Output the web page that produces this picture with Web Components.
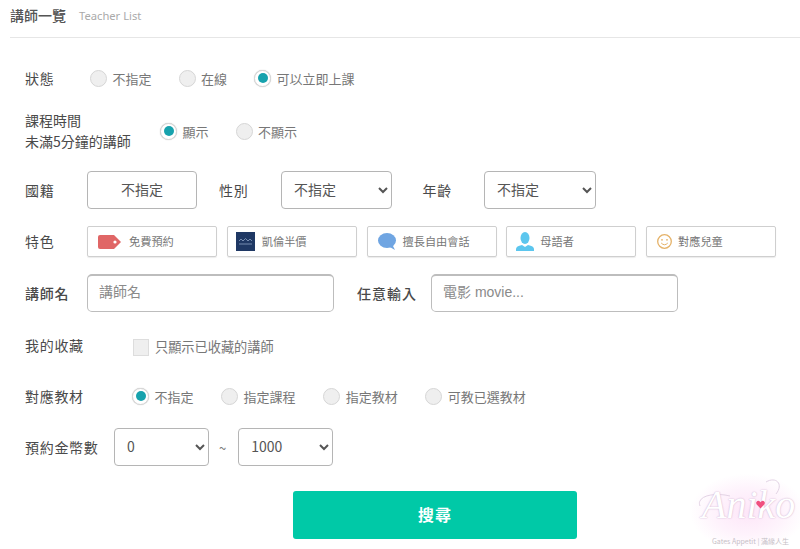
<!DOCTYPE html>
<html lang="zh-Hant">
<head>
<meta charset="utf-8">
<title>講師一覽</title>
<style>
html, body { margin: 0; padding: 0; background: #fff; }
body {
  width: 800px;
  height: 549px;
  overflow: hidden;
  font-family: "Noto Sans CJK TC", "Noto Sans", sans-serif;
}
</style>
</head>
<body>
<teacher-page>
  <page-title heading="講師一覽" sub="Teacher List"></page-title>

  <filter-row label="狀態" label-width="65" gap="27" style="--top:22px;--height:36px">
    <radio-option>不指定</radio-option>
    <radio-option>在線</radio-option>
    <radio-option checked>可以立即上課</radio-option>
  </filter-row>

  <filter-row label="課程時間&#10;未滿5分鐘的講師" label-width="135" gap="27" style="--top:14px;--height:42px;--label-spacing:0">
    <radio-option checked>顯示</radio-option>
    <radio-option>不顯示</radio-option>
  </filter-row>

  <filter-row label="國籍" label-width="62" style="--top:19px;--height:38px">
    <box-button>不指定</box-button>
    <filter-label style="margin:0 32.600px 0 22px">性別</filter-label>
    <select-box width="111">不指定</select-box>
    <filter-label style="margin:0 32px 0 30.500px">年齡</filter-label>
    <select-box width="112">不指定</select-box>
  </filter-row>

  <filter-row label="特色" label-width="62" gap="9.75" style="--top:17px;--height:31px">
    <feature-chip icon-left="10" icon-gap="8" text="免費預約">
      <svg width="23" height="14" viewBox="0 0 23 14"><path d="M2 0H16L23 7L16 14H2Q0 14 0 12V2Q0 0 2 0Z" fill="#e06666"/><circle cx="17" cy="7" r="1.6" fill="#fff"/></svg>
    </feature-chip>
    <feature-chip icon-left="8" icon-gap="7" text="凱倫半價">
      <svg width="19" height="19" viewBox="0 0 19 19"><rect width="19" height="19" fill="#1f3864"/><path d="M3 9L5 7L7 9L9.500 6.500L12 9L14 7L16 9M3 12H16" fill="none" stroke="#8ea3c4" stroke-width=".8"/></svg>
    </feature-chip>
    <feature-chip icon-left="10" icon-gap="7" text="擅長自由會話">
      <svg width="18" height="17" viewBox="0 0 18 17"><ellipse cx="9" cy="7.500" rx="9" ry="7.500" fill="#6fa5e2"/><path d="M10 13L17 17L14 11Z" fill="#6fa5e2"/></svg>
    </feature-chip>
    <feature-chip icon-left="9" icon-gap="6" text="母語者">
      <svg width="18" height="19" viewBox="0 0 18 19"><ellipse cx="9" cy="6" rx="4.500" ry="6" fill="#5cc6ee"/><path d="M0 19V17Q0 14 6 13L9 15L12 13Q18 14 18 17V19Z" fill="#5cc6ee"/></svg>
    </feature-chip>
    <feature-chip icon-left="10" icon-gap="6" text="對應兒童">
      <svg width="15" height="15" viewBox="0 0 15 15"><circle cx="7.500" cy="7.500" r="6.800" fill="none" stroke="#e5b268" stroke-width="1.300"/><circle cx="5" cy="5.800" r=".9" fill="#e5b268"/><circle cx="10" cy="5.800" r=".9" fill="#e5b268"/><path d="M4.200 9Q7.500 12.500 10.800 9" fill="none" stroke="#e5b268" stroke-width="1"/></svg>
    </feature-chip>
  </filter-row>

  <filter-row label="講師名" label-width="62" style="--top:17px;--height:38px;--label-weight:500">
    <text-field placeholder="講師名"></text-field>
    <filter-label style="margin:0 14px 0 23px;font-weight:500;letter-spacing:1px">任意輸入</filter-label>
    <text-field placeholder="電影 movie..."></text-field>
  </filter-row>

  <filter-row label="我的收藏" label-width="108" style="--top:18px;--height:30px">
    <check-option>只顯示已收藏的講師</check-option>
  </filter-row>

  <filter-row label="對應教材" label-width="107" gap="27.600" style="--top:21px;--height:30px">
    <radio-option checked>不指定</radio-option>
    <radio-option>指定課程</radio-option>
    <radio-option>指定教材</radio-option>
    <radio-option>可教已選教材</radio-option>
  </filter-row>

  <filter-row label="預約金幣數" label-width="89" style="--top:17px;--height:38px">
    <select-box width="95">0</select-box>
    <span style="margin:0 12px 0 10px;font-size:13px;color:#777">~</span>
    <select-box width="95">1000</select-box>
  </filter-row>

  <search-button>搜尋</search-button>
  <water-mark></water-mark>
</teacher-page>

<script>
class TeacherPage extends HTMLElement {
  constructor() {
    super();
    this.attachShadow({ mode: "open" }).innerHTML = `
<style>
:host { display: block; position: relative; width: 800px; height: 549px; overflow: hidden; }
</style>
<slot></slot>`;
  }
}

class PageTitle extends HTMLElement {
  connectedCallback() {
    this.attachShadow({ mode: "open" }).innerHTML = `
<style>
:host {
  display: flex;
  align-items: center;
  box-sizing: border-box;
  height: 38px;
  margin-left: 10px;
  padding-bottom: 8px;
  border-bottom: 1px solid #e6e6e6;
}
h1 { margin: 0; font-size: 14px; font-weight: 500; color: #555; line-height: 1; }
span { margin: 1px 0 0 13px; font-family: "Noto Sans", sans-serif; font-size: 11.2px; color: #aaa; }
</style>
<h1>${this.getAttribute("heading")}</h1>
<span>${this.getAttribute("sub")}</span>`;
  }
}

class FilterRow extends HTMLElement {
  connectedCallback() {
    const label = this.getAttribute("label").split("\n").join("<br>");
    this.attachShadow({ mode: "open" }).innerHTML = `
<style>
:host {
  display: flex;
  align-items: center;
  height: var(--height);
  margin-top: var(--top);
  padding-left: 25px;
}
.label {
  flex: none;
  width: ${this.getAttribute("label-width")}px;
  font-size: 14px;
  letter-spacing: var(--label-spacing, .7px);
  line-height: 21px;
  font-weight: var(--label-weight, 400);
  color: #4a4a4a;
}
.items { display: flex; align-items: center; gap: ${this.getAttribute("gap") || 0}px; }
</style>
<div class="label">${label}</div>
<div class="items"><slot></slot></div>`;
  }
}

class FilterLabel extends HTMLElement {
  constructor() {
    super();
    this.attachShadow({ mode: "open" }).innerHTML = `
<style>
:host { display: block; flex: none; font-size: 14px; letter-spacing: .7px; color: #4a4a4a; }
</style>
<slot></slot>`;
  }
}

class RadioOption extends HTMLElement {
  connectedCallback() {
    const on = this.hasAttribute("checked");
    this.attachShadow({ mode: "open" }).innerHTML = `
<style>
:host { display: flex; align-items: center; gap: 5.500px; font-size: 13px; color: #777; }
.dot {
  flex: none;
  box-sizing: border-box;
  width: 17px;
  height: 17px;
  border-radius: 50%;
  border: 1px solid #d6d6d6;
  background: #efefef;
  display: flex;
  align-items: center;
  justify-content: center;
}
.dot.on { background: #fff; box-shadow: 0 0 1px #bbb; }
.dot.on::after { content: ""; width: 10px; height: 10px; border-radius: 50%; background: #17a2ad; }
</style>
<span class="dot ${on ? "on" : ""}"></span><span><slot></slot></span>`;
  }
}

class CheckOption extends HTMLElement {
  constructor() {
    super();
    this.attachShadow({ mode: "open" }).innerHTML = `
<style>
:host { display: flex; align-items: center; gap: 6px; font-size: 13.2px; color: #777; }
.box { flex: none; box-sizing: border-box; width: 16px; height: 17px; border: 1px solid #ddd; background: #efefef; margin-top: 4px; }
span:last-child { margin-top: 3px; }
</style>
<span class="box"></span><span><slot></slot></span>`;
  }
}

class BoxButton extends HTMLElement {
  constructor() {
    super();
    this.attachShadow({ mode: "open" }).innerHTML = `
<style>
:host {
  display: flex;
  align-items: center;
  justify-content: center;
  box-sizing: border-box;
  width: 110px;
  height: 38px;
  padding-bottom: 3px;
  border: 1px solid #b5b5b5;
  border-radius: 4px;
  font-size: 14px;
  color: #555;
}
</style>
<slot></slot>`;
  }
}

class SelectBox extends HTMLElement {
  connectedCallback() {
    this.attachShadow({ mode: "open" }).innerHTML = `
<style>
:host { display: block; flex: none; }
select {
  box-sizing: border-box;
  width: ${this.getAttribute("width")}px;
  height: 38px;
  padding: 0 0 2px 8px;
  border: 1px solid #b5b5b5;
  border-radius: 4px;
  background-color: #fff;
  font-family: "Noto Sans CJK TC", "Noto Sans", sans-serif;
  font-size: 14px;
  color: #555;
}
</style>
<select><option>${this.textContent.trim()}</option></select>`;
  }
}

class FeatureChip extends HTMLElement {
  connectedCallback() {
    this.attachShadow({ mode: "open" }).innerHTML = `
<style>
:host {
  display: flex;
  align-items: center;
  flex: none;
  box-sizing: border-box;
  width: 130px;
  height: 31px;
  padding-left: ${this.getAttribute("icon-left")}px;
  gap: ${this.getAttribute("icon-gap")}px;
  border: 1px solid #cfcfcf;
  border-radius: 2px;
  box-shadow: 0 1px 1px rgba(0,0,0,.08);
  font-size: 11.2px;
  color: #777;
}
::slotted(svg) { display: block; flex: none; }
span { margin-bottom: 2px; }
</style>
<slot></slot><span>${this.getAttribute("text")}</span>`;
  }
}

class TextField extends HTMLElement {
  connectedCallback() {
    this.attachShadow({ mode: "open" }).innerHTML = `
<style>
:host { display: block; flex: none; }
input {
  display: block;
  box-sizing: border-box;
  width: 247px;
  height: 38px;
  padding: 0 11px 3px;
  border: 1px solid #bdbdbd;
  border-top-width: 2px;
  border-radius: 5px;
  outline: none;
  font-family: "Liberation Sans", "Noto Sans CJK TC", sans-serif;
  font-size: 14px;
}
input::placeholder { color: #8a8a8a; opacity: 1; }
</style>
<input type="text" placeholder="${this.getAttribute("placeholder")}">`;
  }
}

class SearchButton extends HTMLElement {
  constructor() {
    super();
    this.attachShadow({ mode: "open" }).innerHTML = `
<style>
:host { display: block; margin: 25px 0 0 293px; width: 284px; }
button {
  display: block;
  width: 100%;
  height: 48px;
  padding: 0 0 2px;
  border: 0;
  border-radius: 3px;
  background: #00c9a7;
  color: #fff;
  font-family: inherit;
  font-size: 16px;
  font-weight: 700;
  letter-spacing: 1px;
}
</style>
<button type="button"><slot></slot></button>`;
  }
}

class WaterMark extends HTMLElement {
  constructor() {
    super();
    this.attachShadow({ mode: "open" }).innerHTML = `
<style>
:host {
  position: absolute;
  left: 684px;
  top: 472px;
  width: 116px;
  height: 77px;
  background: radial-gradient(ellipse 50% 50% at 55% 52%, #fde6f8 0%, #fef3fc 60%, rgba(255,255,255,0) 100%);
}
.name {
  position: absolute;
  left: 18px;
  top: 8px;
  font-family: "Liberation Serif", serif;
  font-style: italic;
  font-size: 40px;
  line-height: 50px;
  color: #fff;
  text-shadow: 0 0 2px #dcc4dc, 0 0 1px #cdb2d0;
}
.swash { position: absolute; left: 0; top: 0; width: 116px; height: 77px; }
.heart { position: absolute; left: 72px; top: 28px; width: 9px; height: 9px; }
.sub {
  position: absolute;
  left: 28px;
  top: 65px;
  white-space: nowrap;
  font-size: 7px;
  line-height: 9px;
  color: #c6c0c6;
}
</style>
<svg class="swash" viewBox="0 0 116 77"><path d="M16 34C12 24 30 20 46 24M82 10C92 4 100 12 92 22" fill="none" stroke="#e3d3e5" stroke-width="1"/></svg>
<div class="name">Aniko</div>
<svg class="heart" viewBox="0 0 10 10"><path d="M5 9.500L.8 5Q-.8 2.500 1.500 1Q3.800 .2 5 2.500Q6.200 .2 8.500 1Q10.800 2.500 9.200 5Z" fill="#f0507f"/></svg>
<div class="sub">Gates Appetit | 滿緣人生</div>`;
  }
}

customElements.define("teacher-page", TeacherPage);
customElements.define("page-title", PageTitle);
customElements.define("filter-row", FilterRow);
customElements.define("filter-label", FilterLabel);
customElements.define("radio-option", RadioOption);
customElements.define("check-option", CheckOption);
customElements.define("box-button", BoxButton);
customElements.define("select-box", SelectBox);
customElements.define("feature-chip", FeatureChip);
customElements.define("text-field", TextField);
customElements.define("search-button", SearchButton);
customElements.define("water-mark", WaterMark);
</script>
</body>
</html>
